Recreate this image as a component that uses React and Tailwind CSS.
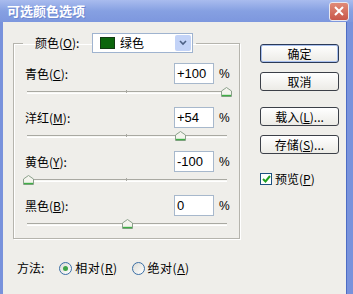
const font = { fontFamily: '"Noto Sans CJK SC", "Liberation Sans", sans-serif' };
const numFont = { fontFamily: '"Liberation Sans", Arial, sans-serif' };

const rows = [
  { label: '青色', key: 'C', value: 100, text: '+100' },
  { label: '洋红', key: 'M', value: 54, text: '+54' },
  { label: '黄色', key: 'Y', value: -100, text: '-100' },
  { label: '黑色', key: 'B', value: 0, text: '0' },
];

const Thumb = () => (
  <svg width="11" height="10" viewBox="0 0 11 10">
    <path d="M0.5 4 L5.5 0.5 L10.5 4 V9.5 H0.5 Z" fill="#f4f4ee" stroke="#8aa08a" />
    <path d="M1 8.5 H10" stroke="#3fae46" strokeWidth="1.4" />
  </svg>
);

const Slider = ({ value }) => {
  const x = 1 + ((value + 100) / 200) * 198 - 5.5;
  return (
    <div className="relative ml-[2px] h-[23px] w-[200px]">
      <div className="absolute top-[7px] left-0 h-[3px] w-full border-t border-[#a9a9a2] bg-[#f7f7f4] border-b border-b-white" />
      <div className="absolute top-[6px] left-[99px] h-[3px] w-px bg-[#a9a9a2]" />
      <div className="absolute top-[3px]" style={{ left: x }}>
        <Thumb />
      </div>
    </div>
  );
};

const Label = ({ text, k }) => (
  <span>
    {text}(<span className="underline">{k}</span>):
  </span>
);

const Row = ({ row }) => (
  <div className="h-[44px]">
    <div className="flex h-[21px] items-center">
      <div className="flex-1 text-[12px]">
        <Label text={row.label} k={row.key} />
      </div>
      <div
        className="flex h-[21px] w-[40px] items-center border border-[#a7b8cc] bg-white pl-[2px] text-[13px]"
        style={numFont}
      >
        {row.text}
      </div>
      <span className="ml-[5px] w-[10px] text-[12px]" style={numFont}>%</span>
    </div>
    <Slider value={row.value} />
  </div>
);

const Button = ({ children, primary }) => (
  <button
    className={
      'flex h-[19px] w-[79px] items-center justify-center rounded-[3px] border text-[12px] ' +
      (primary
        ? 'border-[#2b3a57] bg-gradient-to-b from-white to-[#ecebe6] shadow-[inset_0_0_0_1px_#a9c0ee]'
        : 'border-[#3c4048] bg-gradient-to-b from-white to-[#ecebe6]')
    }
  >
    {children}
  </button>
);

const Radio = ({ checked }) => (
  <span className="flex h-[13px] w-[13px] items-center justify-center rounded-full border border-[#3a6ea5] bg-gradient-to-br from-[#dcdcd6] to-white">
    {checked && <span className="h-[5px] w-[5px] rounded-full bg-[#3fa447]" />}
  </span>
);

export default function App() {
  return (
    <div className="flex h-[294px] w-[353px] flex-col overflow-hidden bg-[#7892dc] text-black" style={font}>
      <div className="flex h-[22px] items-center justify-between bg-gradient-to-b from-[#a9bcee] via-[#86a0e2] to-[#7d97de] pl-[7px] pr-[4px]">
        <span className="text-[13px] font-semibold text-white [text-shadow:1px_1px_0_#6e88d0]">可选颜色选项</span>
        <span className="flex h-[19px] w-[20px] items-center justify-center rounded-[3px] border border-[#e8e8f0] bg-gradient-to-b from-[#e08a78] to-[#c8574a]">
          <svg width="10" height="10" viewBox="0 0 10 10">
            <path d="M1 1 L9 9 M9 1 L1 9" stroke="white" strokeWidth="2" />
          </svg>
        </span>
      </div>
      <div className="ml-[3px] mr-[6px] flex flex-1 border-r border-[#4d6cc4] bg-[#efeeea] pr-0">
        <div className="w-[237px] pl-[10px] pt-[11px]">
          <fieldset className="h-[206px] w-[227px] border border-[#b5b4ad] shadow-[inset_1px_1px_0_#fff,1px_1px_0_#fff]">
            <legend className="ml-[9px] pl-[12px] pr-[3px]">
              <div className="flex h-[20px] items-center">
                <span className="w-[57px] text-[12px]">
                  <Label text="颜色" k="O" />
                </span>
                <div className="flex h-[20px] w-[101px] items-center border border-[#9fb3cf] bg-white">
                  <span className="ml-[7px] h-[12px] w-[15px] border border-[#123a12] bg-[#0b650b]" />
                  <span className="ml-[5px] flex-1 text-[12px]">绿色</span>
                  <span className="mr-px flex h-[16px] w-[16px] items-center justify-center rounded-[2px] bg-[#c3d3f7]">
                    <svg width="8" height="6" viewBox="0 0 8 6">
                      <path d="M1 1 L4 4 L7 1" fill="none" stroke="#4d6185" strokeWidth="1.6" />
                    </svg>
                  </span>
                </div>
              </div>
            </legend>
            <div className="pl-[11px] pr-[10px] pt-[10px]">
              {rows.map((r) => (
                <Row key={r.key} row={r} />
              ))}
            </div>
          </fieldset>
          <div className="mt-[21px] flex h-[16px] items-center pl-[4px] text-[12px]">
            <span>方法:</span>
            <span className="ml-[15px]"><Radio checked /></span>
            <span className="ml-[3px] tracking-[0.5px]">相对(<span className="underline">R</span>)</span>
            <span className="ml-[14px]"><Radio /></span>
            <span className="ml-[3px] tracking-[0.5px]">绝对(<span className="underline">A</span>)</span>
          </div>
        </div>
        <div className="ml-[20px] flex flex-col pt-[22px]">
          <Button primary>确定</Button>
          <div className="mt-[9px]"><Button>取消</Button></div>
          <div className="mt-[16px]"><Button>载入(<span className="underline">L</span>)...</Button></div>
          <div className="mt-[9px]"><Button>存储(<span className="underline">S</span>)...</Button></div>
          <div className="mt-[16px] flex items-center text-[12px]">
            <span className="flex h-[12px] w-[12px] items-center justify-center border border-[#1c5180] bg-white">
              <svg width="9" height="8" viewBox="0 0 9 8">
                <path d="M1 4 L3.5 6.5 L8 1" fill="none" stroke="#21a121" strokeWidth="2" />
              </svg>
            </span>
            <span className="ml-[3px]">预览(<span className="underline">P</span>)</span>
          </div>
        </div>
      </div>
    </div>
  );
}
